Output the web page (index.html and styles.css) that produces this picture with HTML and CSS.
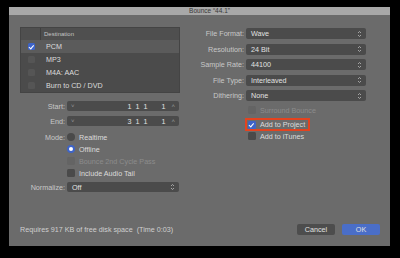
FILE: index.html
```html
<!DOCTYPE html>
<html lang="en">
<head>
	<meta charset="UTF-8">
	<title>Bounce</title>
	<link rel="stylesheet" href="styles.css">
</head>
<body>
<div class="window">
	<div class="titlebar">Bounce “44.1”</div>
	<div class="content">
		<div class="columns">
			<div class="left">
				<div class="table">
					<div class="row head">
						<div class="cell-check"></div>
						<div class="cell-name">Destination</div>
					</div>
					<div class="row selected">
						<div class="cell-check"><span class="box on"></span></div>
						<div class="cell-name">PCM</div>
					</div>
					<div class="row">
						<div class="cell-check"><span class="box"></span></div>
						<div class="cell-name">MP3</div>
					</div>
					<div class="row">
						<div class="cell-check"><span class="box"></span></div>
						<div class="cell-name">M4A: AAC</div>
					</div>
					<div class="row">
						<div class="cell-check"><span class="box"></span></div>
						<div class="cell-name">Burn to CD / DVD</div>
					</div>
				</div>

				<div class="form-left">
					<div class="label">Start:</div>
					<div class="field pos">
						<span class="arrow">&#x2c5;</span>
						<span class="digits">1&nbsp;&nbsp;1&nbsp;&nbsp;1&nbsp;&nbsp;&nbsp;&nbsp;&nbsp;&nbsp;&nbsp;1</span>
						<span class="arrow">&#x2c4;</span>
					</div>
					<div class="label">End:</div>
					<div class="field pos">
						<span class="arrow">&#x2c5;</span>
						<span class="digits">3&nbsp;&nbsp;1&nbsp;&nbsp;1&nbsp;&nbsp;&nbsp;&nbsp;&nbsp;&nbsp;&nbsp;1</span>
						<span class="arrow">&#x2c4;</span>
					</div>
					<div class="label mode-label">Mode:</div>
					<div class="options">
						<div class="option"><span class="radio"></span>Realtime</div>
						<div class="option"><span class="radio on"></span>Offline</div>
						<div class="option disabled"><span class="box"></span>Bounce 2nd Cycle Pass</div>
						<div class="option"><span class="box"></span>Include Audio Tail</div>
					</div>
					<div class="label">Normalize:</div>
					<div class="field select">
						<span>Off</span>
						<svg class="updown" width="5" height="8" viewBox="0 0 5 8"><path d="M1 3 L2.5 1.5 L4 3 M1 5 L2.5 6.5 L4 5" fill="none" stroke="#bbb" stroke-width="0.8"/></svg>
					</div>
				</div>
			</div>

			<div class="right">
				<div class="form-right">
					<div class="label">File Format:</div>
					<div class="field select"><span>Wave</span><svg class="updown" width="5" height="8" viewBox="0 0 5 8"><path d="M1 3 L2.5 1.5 L4 3 M1 5 L2.5 6.5 L4 5" fill="none" stroke="#bbb" stroke-width="0.8"/></svg></div>
					<div class="label">Resolution:</div>
					<div class="field select"><span>24 Bit</span><svg class="updown" width="5" height="8" viewBox="0 0 5 8"><path d="M1 3 L2.5 1.5 L4 3 M1 5 L2.5 6.5 L4 5" fill="none" stroke="#bbb" stroke-width="0.8"/></svg></div>
					<div class="label">Sample Rate:</div>
					<div class="field select"><span>44100</span><svg class="updown" width="5" height="8" viewBox="0 0 5 8"><path d="M1 3 L2.5 1.5 L4 3 M1 5 L2.5 6.5 L4 5" fill="none" stroke="#bbb" stroke-width="0.8"/></svg></div>
					<div class="label">File Type:</div>
					<div class="field select"><span>Interleaved</span><svg class="updown" width="5" height="8" viewBox="0 0 5 8"><path d="M1 3 L2.5 1.5 L4 3 M1 5 L2.5 6.5 L4 5" fill="none" stroke="#bbb" stroke-width="0.8"/></svg></div>
					<div class="label">Dithering:</div>
					<div class="field select"><span>None</span><svg class="updown" width="5" height="8" viewBox="0 0 5 8"><path d="M1 3 L2.5 1.5 L4 3 M1 5 L2.5 6.5 L4 5" fill="none" stroke="#bbb" stroke-width="0.8"/></svg></div>
				</div>
				<div class="checks">
					<div class="option disabled"><span class="box"></span>Surround Bounce</div>
					<div class="highlight">
						<div class="option"><span class="box on"></span>Add to Project</div>
					</div>
					<div class="option"><span class="box"></span>Add to iTunes</div>
				</div>
			</div>
		</div>

		<div class="footer">
			<div class="info">Requires 917 KB of free disk space&nbsp;&nbsp;(Time 0:03)</div>
			<div class="buttons">
				<div class="btn">Cancel</div>
				<div class="btn primary">OK</div>
			</div>
		</div>
	</div>
</div>
</body>
</html>
```

FILE: styles.css
```css
* {
	margin: 0;
	padding: 0;
	box-sizing: border-box;
}

body {
	background-color: #000;
	font-family: "Liberation Sans", Arial, sans-serif;
	font-size: 7.2px;
	color: #dcdcdc;
	width: 400px;
	height: 258px;
	overflow: hidden;
}

.window {
	margin: 7px 0 0 9px;
	width: 381px;
	height: 239px;
	background-color: #6b6b6b;
	display: flex;
	flex-direction: column;
}
.titlebar {
	height: 8px;
	background-color: #a8a8a8;
	color: #3a3a3a;
	font-size: 6.5px;
	line-height: 8px;
	text-align: center;
	padding-left: 20px;
}
.content {
	flex: 1;
	display: flex;
	flex-direction: column;
	padding: 12px 10px 11px 11px;
}
.columns {
	flex: 1;
	display: flex;
}

/* left side */
.left {
	width: 160px;
}
.table {
	background-color: #4b4b4b;
	border: 1px solid #444;
}
.row {
	display: flex;
	height: 13px;
	align-items: center;
}
.row.head {
	height: 12px;
	background-color: #4f4f4f;
	color: #c4c4c4;
	font-size: 6px;
}
.row.selected {
	background-color: #5b5b5b;
}
.cell-check {
	width: 20px;
	height: 100%;
	display: flex;
	align-items: center;
	justify-content: center;
}
.head .cell-check {
	border-right: 1px solid #3f3f3f;
}
.cell-name {
	padding-left: 5px;
}
.head .cell-name {
	padding-left: 3px;
}

.box {
	display: inline-block;
	width: 7px;
	height: 7px;
	border-radius: 1.5px;
	background-color: #555;
	position: relative;
	flex-shrink: 0;
}
.box.on,
.option .box.on {
	background-color: #3e64c8;
}
.box.on::after {
	content: "";
	position: absolute;
	left: 2.4px;
	top: 0.8px;
	width: 1.6px;
	height: 3.6px;
	border: solid #fff;
	border-width: 0 1px 1px 0;
	transform: rotate(40deg);
}

.form-left {
	margin-top: 8px;
	display: grid;
	grid-template-columns: 45px 112px;
	column-gap: 2px;
	row-gap: 5px;
	align-items: center;
}
.label {
	text-align: right;
	color: #c8c8c8;
}
.field {
	height: 10px;
	background-color: #4b4b4b;
	border-radius: 2px;
	display: flex;
	align-items: center;
	padding: 0 4px;
	color: #e2e2e2;
}
.field.pos .arrow {
	color: #9a9a9a;
	font-size: 6px;
}
.field.pos .digits {
	flex: 1;
	text-align: right;
	padding-right: 6px;
}
.mode-label {
	align-self: start;
	margin-top: 2px;
}
.options {
	display: flex;
	flex-direction: column;
	gap: 4px;
	padding-top: 2px;
}
.option {
	display: flex;
	align-items: center;
	height: 8px;
	gap: 4px;
}
.option .box {
	width: 8px;
	height: 8px;
	background-color: #4a4a4a;
}
.option.disabled {
	color: #8c8c8c;
}
.option.disabled .box {
	background-color: #646464;
}
.radio {
	display: inline-block;
	width: 8px;
	height: 8px;
	border-radius: 50%;
	background-color: #4a4a4a;
}
.radio.on {
	background-color: #fff;
	border: 2.7px solid #3e64c8;
}
.select {
	justify-content: space-between;
	padding: 0 4px 0 5px;
}

/* right side */
.right {
	margin-left: 10px;
	width: 176px;
}
.form-right {
	margin-top: 1px;
	display: grid;
	grid-template-columns: 54px 120px;
	column-gap: 2px;
	row-gap: 4.6px;
	align-items: center;
}
.form-right .field {
	height: 11px;
}
.checks {
	margin-top: 5px;
	margin-left: 58px;
	display: flex;
	flex-direction: column;
	gap: 4px;
}
.highlight {
	width: 65px;
	height: 13px;
	margin: 0 0 -3px -3px;
	padding: 0 0 0 1px;
	border: 2px solid #e4431f;
	display: flex;
	align-items: center;
}

/* footer */
.footer {
	display: flex;
	justify-content: space-between;
	align-items: center;
}
.info {
	color: #cfcfcf;
}
.buttons {
	display: flex;
	gap: 7px;
}
.btn {
	width: 38px;
	height: 11px;
	border-radius: 2px;
	background-color: #4d4d4d;
	text-align: center;
	line-height: 11px;
	color: #e0e0e0;
}
.btn.primary {
	background-color: #4a6ec8;
}
```
